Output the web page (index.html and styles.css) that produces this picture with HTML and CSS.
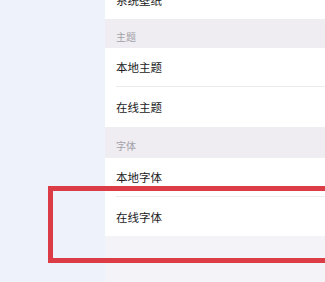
FILE: index.html
```html
<!DOCTYPE html>
<html>
<head>
<meta charset="utf-8">
<link rel="stylesheet" href="styles.css">
</head>
<body>
<div class="app">
  <aside class="sidebar"></aside>
  <main class="main">
    <div class="list">
      <div class="group">
        <div class="row"><span>系统壁纸</span></div>
      </div>
      <div class="header">主题</div>
      <div class="group">
        <div class="row sep"><span>本地主题</span></div>
        <div class="row tall"><span>在线主题</span></div>
      </div>
      <div class="header wide">字体</div>
      <div class="group">
        <div class="row sep"><span>本地字体</span></div>
        <div class="row"><span>在线字体</span></div>
      </div>
    </div>
  </main>
  <div class="highlight"></div>
</div>
</body>
</html>
```

FILE: styles.css
```css
html, body {
  margin: 0;
  padding: 0;
  width: 325px;
  height: 282px;
  overflow: hidden;
  font-family: "Noto Sans CJK SC", "Noto Sans", sans-serif;
}
.app {
  position: relative;
  display: flex;
  height: 282px;
}
.sidebar {
  width: 105px;
  flex: none;
  background: #eef2fb;
}
.main {
  flex: 1;
  background: #f4f3f7;
  overflow: hidden;
}
.list {
  margin-top: -20px;
}
.group {
  background: #ffffff;
  padding-left: 11px;
}
.row {
  height: 39px;
  display: flex;
  align-items: center;
  font-size: 11.5px;
  color: #1a1a1c;
  box-sizing: border-box;
}
.row.tall {
  height: 40px;
}
.row.sep {
  border-bottom: 1px solid #ececef;
}
.header {
  height: 29px;
  background: #efedf2;
  padding-left: 11px;
  box-sizing: border-box;
  display: flex;
  align-items: flex-end;
  padding-bottom: 4px;
  font-size: 10px;
  color: #a3a1a8;
}
.header.wide {
  height: 31px;
  padding-bottom: 5px;
}
.highlight {
  position: absolute;
  left: 48px;
  top: 186px;
  width: 300px;
  height: 77px;
  border: 5px solid #dc3c46;
  box-sizing: border-box;
}
```
